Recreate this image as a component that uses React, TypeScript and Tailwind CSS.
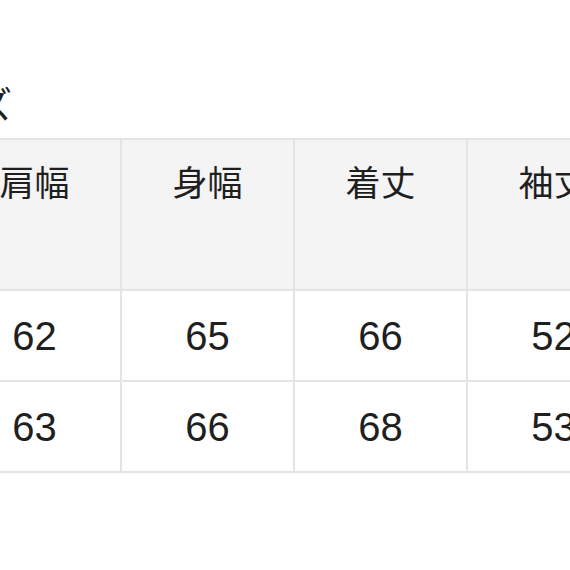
const HEADERS = ['肩幅', '身幅', '着丈', '袖丈'];
const ROWS = [
  ['62', '65', '66', '52'],
  ['63', '66', '68', '53'],
];

export default function App() {
  return (
    <div
      className="h-[570px] w-[570px] overflow-hidden bg-white text-[#1f1f1f]"
      style={{ fontFamily: '"Liberation Sans", "Noto Sans CJK JP", sans-serif' }}
    >
      <div className="pt-[88px]">
        <div className="-ml-[98px] whitespace-nowrap text-[37px] leading-none">サイズ</div>
        <table className="mt-[13px] -ml-[53px] w-[694px] table-fixed border-collapse">
          <thead>
            <tr>
              {HEADERS.map((h) => (
                <th
                  key={h}
                  className="h-[151px] border-2 border-[#e4e4e4] bg-[#f4f4f4] pt-[19px] align-top text-[35px] font-normal leading-[1.4]"
                >
                  {h}
                </th>
              ))}
            </tr>
          </thead>
          <tbody>
            {ROWS.map((row, i) => (
              <tr key={i}>
                {row.map((v, j) => (
                  <td
                    key={j}
                    className="h-[91px] border-2 border-[#e4e4e4] text-center align-middle text-[40px] leading-none"
                  >
                    {v}
                  </td>
                ))}
              </tr>
            ))}
          </tbody>
        </table>
      </div>
    </div>
  );
}
